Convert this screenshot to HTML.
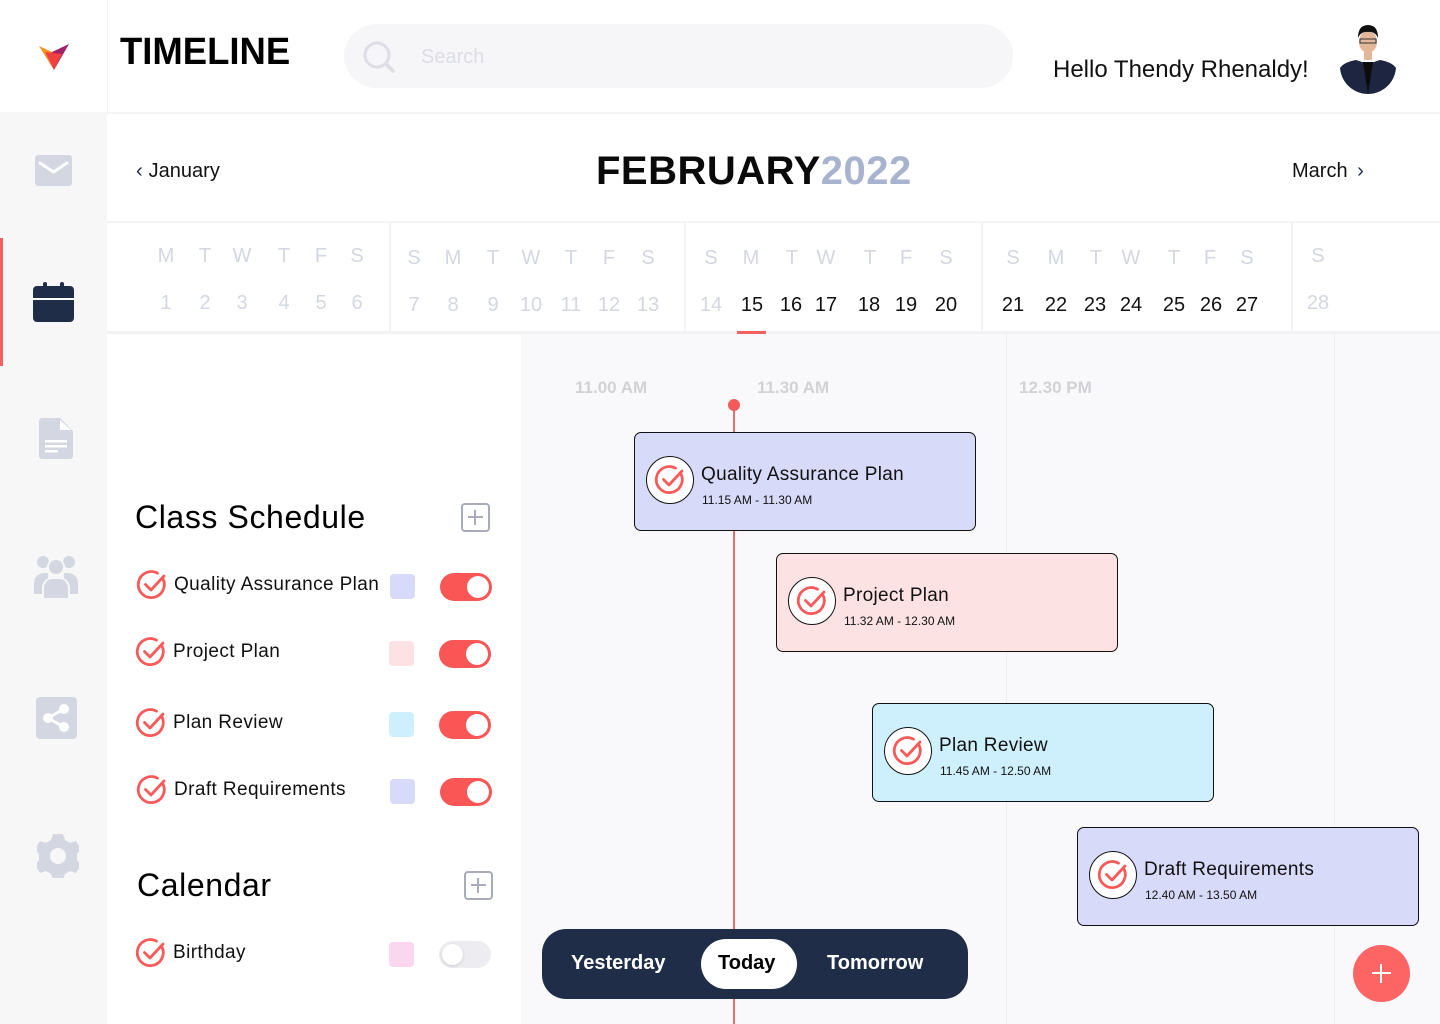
<!DOCTYPE html>
<html><head><meta charset="utf-8">
<style>
*{margin:0;padding:0;box-sizing:border-box}
body{width:1440px;height:1024px;position:relative;overflow:hidden;background:#fff;font-family:"Liberation Sans",sans-serif;color:#111}
.a{position:absolute}
.d{position:absolute;transform:translateX(-50%);font-size:20px;color:#d4d7e2;line-height:1}
.b{color:#111}
.chk{position:absolute;width:32px;height:32px}
.card{position:absolute;width:342px;height:99px;border:1px solid #111;border-radius:7px}
.card .ic{position:absolute;left:11px;top:23px;width:48px;height:48px;border:1px solid #111;border-radius:50%;background:#fff}
.card .t{position:absolute;left:66px;top:31px;font-size:19px;color:#111;letter-spacing:0.3px}
.card .s{position:absolute;left:67px;top:60px;font-size:12px;color:#111}
.row{position:absolute;left:135px;font-size:19px;color:#111;letter-spacing:0.4px}
.sw{position:absolute;width:25px;height:25px;border-radius:4px}
.tg{position:absolute;width:52px;height:28px;border-radius:14px;background:#fa5656}
.tg:after{content:"";position:absolute;right:3px;top:3px;width:22px;height:22px;border-radius:50%;background:#fff}
</style></head><body>
<svg width="0" height="0" style="position:absolute"><defs><symbol id="ck" viewBox="0 0 32 32"><path d="M27 10 A13 13 0 1 1 21.5 4.2" fill="none" stroke="#f85a5a" stroke-width="2.8" stroke-linecap="round"/><path d="M9.5 15.5 L15 21 L28 7" fill="none" stroke="#f85a5a" stroke-width="2.8" stroke-linecap="round" stroke-linejoin="round"/></symbol></defs></svg>

<!-- sidebar -->
<div class="a" style="left:0;top:112px;width:107px;height:912px;background:#f7f7f8"></div>
<div class="a" style="left:107px;top:0;width:1px;height:112px;background:#f0f0f2"></div>
<svg class="a" style="left:38px;top:42px" width="32" height="30" viewBox="0 0 32 30"><path d="M1 4 L14 10 L16 28 Z" fill="#f7931e"/><path d="M31 2 L16 28 L14 10 Z" fill="#a0236a"/><path d="M7 10 L24 12 L16 28 Z" fill="#f04040"/></svg>
<div class="a" style="left:0;top:238px;width:3px;height:128px;background:#f46060"></div>
<svg class="a" style="left:35px;top:155px" width="37" height="31" viewBox="0 0 37 31"><rect width="37" height="31" rx="3" fill="#d4d7e1"/><path d="M5 8 L18.5 17 L32 8" fill="none" stroke="#fff" stroke-width="3" stroke-linecap="round"/></svg>
<svg class="a" style="left:33px;top:282px" width="41" height="41" viewBox="0 0 41 41"><rect x="0" y="4" width="41" height="36" rx="4" fill="#1f2d48"/><rect x="10" y="0" width="4" height="8" rx="2" fill="#1f2d48"/><rect x="27" y="0" width="4" height="8" rx="2" fill="#1f2d48"/><rect x="0" y="16" width="41" height="2" fill="#fff"/></svg>
<svg class="a" style="left:39px;top:418px" width="34" height="41" viewBox="0 0 34 41"><path d="M3 0 H21 L34 13 V38 a3 3 0 0 1-3 3 H3 a3 3 0 0 1-3-3 V3 a3 3 0 0 1 3-3Z" fill="#d4d7e1"/><path d="M21 2 V12 H32" fill="#fff"/><rect x="6" y="22" width="22" height="2.5" fill="#fff"/><rect x="6" y="27" width="22" height="2.5" fill="#fff"/><rect x="6" y="32" width="13" height="2.5" fill="#fff"/></svg>
<svg class="a" style="left:34px;top:555px" width="44" height="45" viewBox="0 0 44 45"><circle cx="9" cy="7" r="6" fill="#d4d7e1"/><circle cx="35" cy="7" r="6" fill="#d4d7e1"/><path d="M0 39 V28 a10 10 0 0 1 10-10 H14 V39Z M44 39 V28 a10 10 0 0 0-10-10 H30 V39Z" fill="#d4d7e1"/><circle cx="22" cy="12" r="8" fill="#d4d7e1" stroke="#f7f7f8" stroke-width="2"/><path d="M9 44 V33 a10 10 0 0 1 10-10 h6 a10 10 0 0 1 10 10 V44Z" fill="#d4d7e1" stroke="#f7f7f8" stroke-width="2"/></svg>
<svg class="a" style="left:36px;top:697px" width="41" height="42" viewBox="0 0 41 42"><rect width="41" height="42" rx="4" fill="#d4d7e1"/><circle cx="28" cy="12" r="5" fill="#fff"/><circle cx="12" cy="21" r="5" fill="#fff"/><circle cx="28" cy="30" r="5" fill="#fff"/><path d="M28 12 L12 21 L28 30" stroke="#fff" stroke-width="3" fill="none"/></svg>
<svg class="a" style="left:37px;top:834px" width="42" height="44" viewBox="0 0 42 44"><path d="M16 0h10l2 6 5 3 6-2 5 8-4 5v6l4 5-5 8-6-2-5 3-2 6H16l-2-6-5-3-6 2-5-8 4-5v-6l-4-5 5-8 6 2 5-3z" fill="#d4d7e1"/><circle cx="21" cy="22" r="8" fill="#f7f7f8"/></svg>

<!-- header -->
<div class="a" style="left:120px;top:31px;font-size:38px;font-weight:bold;color:#000;transform:scaleX(0.96);transform-origin:left">TIMELINE</div>
<div class="a" style="left:344px;top:24px;width:669px;height:64px;border-radius:32px;background:#f6f6f8"></div>
<svg class="a" style="left:362px;top:40px" width="34" height="34" viewBox="0 0 34 34"><circle cx="15" cy="15" r="12" fill="none" stroke="#dcdde6" stroke-width="3"/><path d="M24 24 L31 31" stroke="#dcdde6" stroke-width="3.5" stroke-linecap="round"/></svg>
<div class="a" style="left:421px;top:46px;font-size:20px;color:#dcdde6">Search</div>
<div class="a" style="left:1053px;top:56px;font-size:24px;color:#111">Hello Thendy Rhenaldy!</div>
<svg class="a" style="left:1340px;top:22px" width="56" height="72" viewBox="0 0 56 72"><defs><clipPath id="cp"><circle cx="28" cy="44" r="28"/></clipPath></defs><g clip-path="url(#cp)"><rect width="56" height="72" fill="#fff"/><path d="M0 72 V46 Q4 40 16 38 L28 42 L40 38 Q52 40 56 46 V72Z" fill="#1d2540"/><path d="M23 40 L28 72 L33 40Z" fill="#0c0c0c"/></g><ellipse cx="28" cy="20" rx="9" ry="11" fill="#e3b79a"/><path d="M18 16 Q18 3 28 3 Q38 3 38 16 Q35 9 28 10 Q21 9 18 16Z" fill="#111"/><rect x="20" y="17" width="16" height="4" fill="none" stroke="#333" stroke-width="1"/><rect x="24" y="30" width="8" height="8" fill="#e3b79a"/></svg>
<div class="a" style="left:107px;top:112px;width:1333px;height:2px;background:#f4f4f6"></div>

<!-- month row -->
<div class="a" style="left:136px;top:160px;font-size:20px;color:#111"><span style="color:#1f2d48;margin-right:6px">&#8249;</span>January</div>
<div class="a" style="left:596px;top:149px;font-size:40px;font-weight:bold;color:#0a0a0a;letter-spacing:0.5px">FEBRUARY<span style="color:#a8b3cf">2022</span></div>
<div class="a" style="left:1292px;top:160px;font-size:20px;color:#111">March <span style="color:#1f2d48;margin-left:4px">&#8250;</span></div>
<div class="a" style="left:107px;top:221px;width:1333px;height:2px;background:#f4f4f6"></div>
<div class="a" style="left:107px;top:331px;width:1333px;height:3px;background:#f2f2f4"></div>
<div class="a" style="left:389px;top:223px;width:2px;height:108px;background:#f3f3f5"></div>
<div class="a" style="left:684px;top:223px;width:2px;height:108px;background:#f3f3f5"></div>
<div class="a" style="left:981px;top:223px;width:2px;height:108px;background:#f3f3f5"></div>
<div class="a" style="left:1291px;top:223px;width:2px;height:108px;background:#f3f3f5"></div>

<div class="d" style="left:166px;top:246px">M</div><div class="d" style="left:205px;top:246px">T</div><div class="d" style="left:242px;top:246px">W</div><div class="d" style="left:284px;top:246px">T</div><div class="d" style="left:321px;top:246px">F</div><div class="d" style="left:357px;top:246px">S</div>
<div class="d" style="left:414px;top:248px">S</div><div class="d" style="left:453px;top:248px">M</div><div class="d" style="left:493px;top:248px">T</div><div class="d" style="left:531px;top:248px">W</div><div class="d" style="left:571px;top:248px">T</div><div class="d" style="left:609px;top:248px">F</div><div class="d" style="left:648px;top:248px">S</div>
<div class="d" style="left:711px;top:248px">S</div><div class="d" style="left:751px;top:248px">M</div><div class="d" style="left:792px;top:248px">T</div><div class="d" style="left:826px;top:248px">W</div><div class="d" style="left:870px;top:248px">T</div><div class="d" style="left:906px;top:248px">F</div><div class="d" style="left:946px;top:248px">S</div>
<div class="d" style="left:1013px;top:248px">S</div><div class="d" style="left:1056px;top:248px">M</div><div class="d" style="left:1096px;top:248px">T</div><div class="d" style="left:1131px;top:248px">W</div><div class="d" style="left:1174px;top:248px">T</div><div class="d" style="left:1210px;top:248px">F</div><div class="d" style="left:1247px;top:248px">S</div>
<div class="d" style="left:1318px;top:246px">S</div>

<div class="d" style="left:166px;top:293px">1</div><div class="d" style="left:205px;top:293px">2</div><div class="d" style="left:242px;top:293px">3</div><div class="d" style="left:284px;top:293px">4</div><div class="d" style="left:321px;top:293px">5</div><div class="d" style="left:357px;top:293px">6</div>
<div class="d" style="left:414px;top:295px">7</div><div class="d" style="left:453px;top:295px">8</div><div class="d" style="left:493px;top:295px">9</div><div class="d" style="left:531px;top:295px">10</div><div class="d" style="left:571px;top:295px">11</div><div class="d" style="left:609px;top:295px">12</div><div class="d" style="left:648px;top:295px">13</div>
<div class="d" style="left:711px;top:295px">14</div><div class="d b" style="left:752px;top:295px">15</div><div class="d b" style="left:791px;top:295px">16</div><div class="d b" style="left:826px;top:295px">17</div><div class="d b" style="left:869px;top:295px">18</div><div class="d b" style="left:906px;top:295px">19</div><div class="d b" style="left:946px;top:295px">20</div>
<div class="d b" style="left:1013px;top:295px">21</div><div class="d b" style="left:1056px;top:295px">22</div><div class="d b" style="left:1095px;top:295px">23</div><div class="d b" style="left:1131px;top:295px">24</div><div class="d b" style="left:1174px;top:295px">25</div><div class="d b" style="left:1211px;top:295px">26</div><div class="d b" style="left:1247px;top:295px">27</div>
<div class="d" style="left:1318px;top:293px">28</div>
<div class="a" style="left:737px;top:331px;width:29px;height:3px;background:#f46060"></div>

<!-- timeline area -->
<div class="a" style="left:521px;top:334px;width:919px;height:690px;background:#f9f9fb"></div>
<div class="a" style="left:1006px;top:334px;width:1px;height:690px;background:#efeff2"></div>
<div class="a" style="left:1334px;top:334px;width:1px;height:690px;background:#efeff2"></div>
<div class="a" style="left:575px;top:378px;font-size:17px;font-weight:bold;color:#d2d2d6">11.00 AM</div>
<div class="a" style="left:757px;top:378px;font-size:17px;font-weight:bold;color:#d2d2d6">11.30 AM</div>
<div class="a" style="left:1019px;top:378px;font-size:17px;font-weight:bold;color:#d2d2d6">12.30 PM</div>
<div class="a" style="left:733px;top:405px;width:2px;height:619px;background:#f46a6a"></div>
<div class="a" style="left:728px;top:399px;width:12px;height:12px;border-radius:50%;background:#f45a5a"></div>

<div class="card" style="left:634px;top:432px;background:#d7daf8"><div class="ic"><svg class="chk" style="left:7px;top:7px" width="32" height="32"><use href="#ck"/></svg></div><div class="t">Quality Assurance Plan</div><div class="s">11.15 AM - 11.30 AM</div></div>
<div class="card" style="left:776px;top:553px;background:#fde2e4"><div class="ic"><svg class="chk" style="left:7px;top:7px" width="32" height="32"><use href="#ck"/></svg></div><div class="t">Project Plan</div><div class="s">11.32 AM - 12.30 AM</div></div>
<div class="card" style="left:872px;top:703px;background:#cdf0fc"><div class="ic"><svg class="chk" style="left:7px;top:7px" width="32" height="32"><use href="#ck"/></svg></div><div class="t">Plan Review</div><div class="s">11.45 AM - 12.50 AM</div></div>
<div class="card" style="left:1077px;top:827px;background:#d7daf8"><div class="ic"><svg class="chk" style="left:7px;top:7px" width="32" height="32"><use href="#ck"/></svg></div><div class="t">Draft Requirements</div><div class="s">12.40 AM - 13.50 AM</div></div>

<div class="a" style="left:542px;top:929px;width:426px;height:70px;border-radius:24px;background:#1f2d48"></div>
<div class="a" style="left:701px;top:939px;width:96px;height:50px;border-radius:25px;background:#fff"></div>
<div class="a" style="left:571px;top:952px;font-size:20px;font-weight:bold;color:#fff">Yesterday</div>
<div class="a" style="left:718px;top:952px;font-size:20px;font-weight:bold;color:#000">Today</div>
<div class="a" style="left:827px;top:952px;font-size:20px;font-weight:bold;color:#fff">Tomorrow</div>
<div class="a" style="left:1353px;top:945px;width:57px;height:57px;border-radius:50%;background:#fd6464"></div>
<div class="a" style="left:1372px;top:972px;width:19px;height:2px;background:#fff"></div>
<div class="a" style="left:1380px;top:964px;width:2px;height:19px;background:#fff"></div>

<!-- left panel -->
<div class="a" style="left:135px;top:499px;font-size:32px;color:#000;letter-spacing:0.6px">Class Schedule</div>
<div class="a" style="left:461px;top:503px;width:29px;height:29px;border:2px solid #a8abba;border-radius:4px"></div>
<div class="a" style="left:468px;top:516px;width:15px;height:2px;background:#a8abba"></div><div class="a" style="left:474px;top:510px;width:2px;height:15px;background:#a8abba"></div>

<svg class="a" style="left:136px;top:569px" width="32" height="32"><use href="#ck"/></svg>
<div class="row" style="left:174px;top:574px">Quality Assurance Plan</div>
<div class="sw" style="left:390px;top:574px;background:#d7daf8"></div><div class="tg" style="left:440px;top:573px"></div>

<svg class="a" style="left:135px;top:636px" width="32" height="32"><use href="#ck"/></svg>
<div class="row" style="left:173px;top:641px">Project Plan</div>
<div class="sw" style="left:389px;top:641px;background:#fde2e4"></div><div class="tg" style="left:439px;top:640px"></div>

<svg class="a" style="left:135px;top:707px" width="32" height="32"><use href="#ck"/></svg>
<div class="row" style="left:173px;top:712px">Plan Review</div>
<div class="sw" style="left:389px;top:712px;background:#cdf0fc"></div><div class="tg" style="left:439px;top:711px"></div>

<svg class="a" style="left:136px;top:774px" width="32" height="32"><use href="#ck"/></svg>
<div class="row" style="left:174px;top:779px">Draft Requirements</div>
<div class="sw" style="left:390px;top:779px;background:#d7daf8"></div><div class="tg" style="left:440px;top:778px"></div>

<div class="a" style="left:137px;top:867px;font-size:32px;color:#000;letter-spacing:0.6px">Calendar</div>
<div class="a" style="left:464px;top:871px;width:29px;height:29px;border:2px solid #a8abba;border-radius:4px"></div>
<div class="a" style="left:471px;top:884px;width:15px;height:2px;background:#a8abba"></div><div class="a" style="left:477px;top:878px;width:2px;height:15px;background:#a8abba"></div>

<svg class="a" style="left:135px;top:937px" width="32" height="32"><use href="#ck"/></svg>
<div class="row" style="left:173px;top:942px">Birthday</div>
<div class="sw" style="left:389px;top:942px;background:#fad7ef"></div>
<div class="a" style="left:439px;top:941px;width:52px;height:27px;border-radius:14px;background:#ededf1"></div>
<div class="a" style="left:442px;top:944px;width:21px;height:21px;border-radius:50%;background:#fff;box-shadow:0 1px 3px rgba(0,0,0,.15)"></div>
</body></html>
